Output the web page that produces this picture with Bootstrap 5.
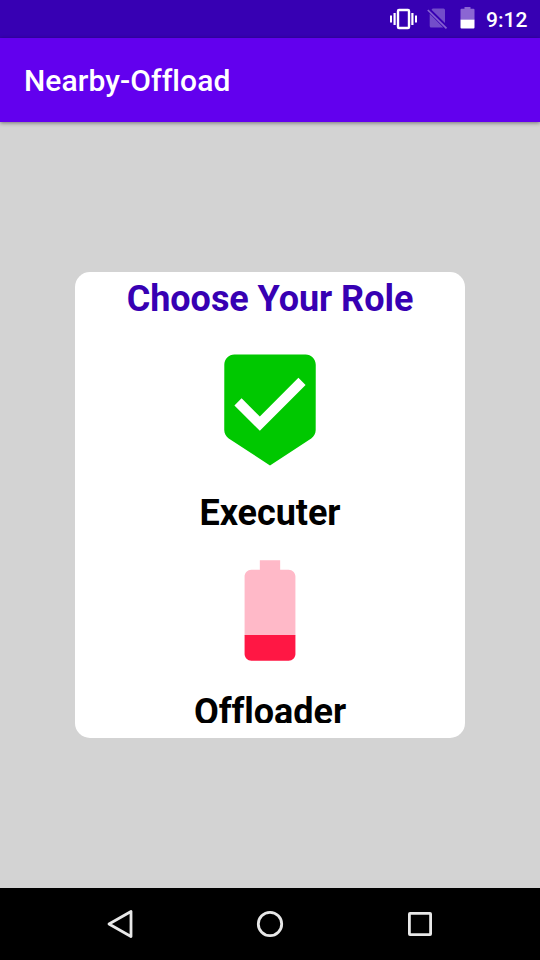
<!DOCTYPE html>
<html lang="en">
<head>
<meta charset="utf-8">
<meta name="viewport" content="width=device-width, initial-scale=1">
<title>Nearby-Offload</title>
<link href="https://cdn.jsdelivr.net/npm/bootstrap@5.3.0/dist/css/bootstrap.min.css" rel="stylesheet">
<style>
  body { font-family: Roboto, "Liberation Sans", sans-serif; font-variant-ligatures: none; background: #d3d3d3; height: 960px; }
  svg { display: block; flex: none; }
  .status-bar { height: 38px; background: #3700b3; padding: 1px 12px 0 0; }
  .status-icons { gap: 10px; margin-right: 11px; padding-bottom: 1px; }
  .clock { font-size: 21px; font-weight: 500; line-height: 25px; width: 42px; white-space: nowrap; padding-top: 1px; }
  .app-bar { height: 84px; background: #6200ee; padding: 1px 24px 0; box-shadow: 0 1px 4px rgba(0,0,0,.45); }
  .app-title { font-size: 30px; font-weight: 500; line-height: 36px; letter-spacing: .08px; }
  .role-card { width: 390px; height: 466px; border-radius: 15px; padding: 6px 15px 15px; }
  .role-text { font-size: 36px; font-weight: 700; line-height: 42px; letter-spacing: -.05px; }
  .role-head { color: #3700b3; }
  .pic-top { margin: 29px 0 21px; }
  .pic-low { margin: 14.500px 0 20.500px; }
  .nav-keys { height: 72px; padding: 0 45px; }
</style>
</head>
<body class="d-flex flex-column overflow-hidden">
  <div class="status-bar d-flex align-items-center justify-content-end text-white">
    <div class="status-icons d-flex align-items-center">
      <svg width="28" height="24" viewBox="389 7.500 28 24" fill="#fff"><path d="M390 16h2v7h-2zM393.500 13.500h2.200v12h-2.200zM411.300 13.500h2.200v12h-2.200zM415 16h2v7h-2z"/><rect x="398" y="10.500" width="11" height="18" rx="1" fill="none" stroke="#fff" stroke-width="2.400"/></svg>
      <svg width="22" height="24" viewBox="427 7.500 22 24"><path d="M432.700 9H443.500Q445 9 445 10.500V23.400L431.500 10.200ZM429.700 14.300L443.300 28H431.200Q429.700 28 429.700 26.500Z" fill="#fff" fill-opacity=".3"/><path d="M427.800 10.500L446.500 28.800" stroke="#8762d2" stroke-width="1.700"/></svg>
      <svg width="16" height="24" viewBox="459.500 7.500 16 24"><path d="M461 20V10.300Q461 9.300 462 9.300H465V7.500H471V9.300H474Q475 9.300 475 10.300V20Z" fill="#8b66d3"/><path d="M461 20H475V28Q475 29 474 29H462Q461 29 461 28Z" fill="#fff"/></svg>
    </div>
    <span class="clock">9:12</span>
  </div>
  <header class="app-bar d-flex align-items-center text-white position-relative">
    <span class="app-title">Nearby-Offload</span>
  </header>
  <main class="flex-grow-1 d-flex align-items-center justify-content-center">
    <section class="role-card bg-white">
      <div class="h-100 overflow-hidden d-flex flex-column align-items-center">
        <div class="role-text role-head">Choose Your Role</div>
        <svg class="pic-top" width="122" height="122" viewBox="0 0 24 24" fill="#00c800"><path d="M19 1.100H5c-1.100 0-1.990.9-1.990 2L3 15.930c0 .69.35 1.300.88 1.660L12 22.900l8.110-5.310c.53-.36.88-.97.88-1.660L21 3.100c0-1.100-.9-2-2-2zm-9 15l-5-5 1.410-1.410L10 13.270l7.590-7.590L19 7.100l-9 9z"/></svg>
        <div class="role-text text-black">Executer</div>
        <svg class="pic-low" width="122" height="122" viewBox="0 0 24 24"><path fill="#ffb9c8" d="M17 5.430C17 4.700 16.400 4.100 15.670 4.100H14V2.200h-4v1.900H8.330C7.600 4.100 7 4.700 7 5.430V17h10V5.430z"/><path fill="#ff1744" d="M7 16.900v3.770C7 21.400 7.600 22 8.330 22h7.330c.74 0 1.340-.6 1.340-1.330V16.900H7z"/></svg>
        <div class="role-text text-black">Offloader</div>
      </div>
    </section>
  </main>
  <nav class="nav-keys d-flex align-items-center bg-black">
    <div class="flex-fill d-flex justify-content-center"><svg width="60" height="40" viewBox="90 904 60 40"><path d="M109 924L131 911.500V936.500Z" fill="none" stroke="#e8e8e8" stroke-width="2.800" stroke-linejoin="round"/></svg></div>
    <div class="flex-fill d-flex justify-content-center"><svg width="60" height="40" viewBox="240 904 60 40"><circle cx="270" cy="924" r="11.700" fill="none" stroke="#e8e8e8" stroke-width="2.800"/></svg></div>
    <div class="flex-fill d-flex justify-content-center"><svg width="60" height="40" viewBox="390 904 60 40"><rect x="409.400" y="913.400" width="21.200" height="21.200" rx=".6" fill="none" stroke="#e8e8e8" stroke-width="2.800"/></svg></div>
  </nav>
  <script src="https://cdn.jsdelivr.net/npm/bootstrap@5.3.0/dist/js/bootstrap.bundle.min.js"></script>
</body>
</html>
